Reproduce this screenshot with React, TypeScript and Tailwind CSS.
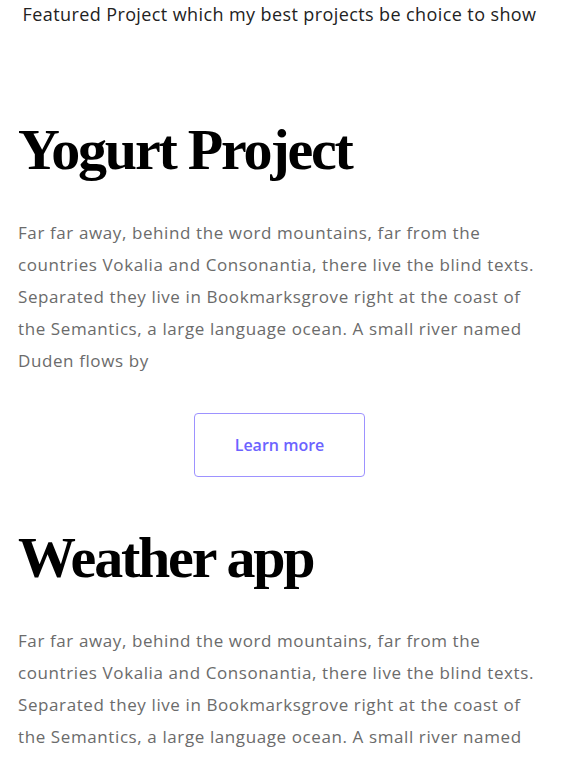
import React, { FC } from "react";

const BODY =
  "Far far away, behind the word mountains, far from the countries Vokalia and Consonantia, there live the blind texts. Separated they live in Bookmarksgrove right at the coast of the Semantics, a large language ocean. A small river named Duden flows by";

interface ProjectProps {
  title: string;
  button?: boolean;
}

const Project: FC<ProjectProps> = ({ title, button }) => {
  return (
    <div className="flex flex-col">
      <h2 className="font-['Liberation_Serif',serif] font-bold text-[58px] leading-[70px] text-black tracking-[-2.2px]">
        {title}
      </h2>
      <p className="mt-[32px] pr-[2px] font-['Open_Sans',sans-serif] text-[17px] leading-[32px] tracking-[0.6px] text-[#6b6b6b]">
        {BODY}
      </p>
      {button && (
        <div className="flex justify-center mt-[36px] pr-[10px]">
          <button className="w-[171px] h-[64px] rounded-[4px] border border-[#9d92ff] text-[#6c63ff] font-['Open_Sans',sans-serif] font-semibold text-[16px]">
            Learn more
          </button>
        </div>
      )}
    </div>
  );
};

const App: FC = () => {
  return (
    <div className="min-h-screen bg-white">
      <div className="pt-[1px] text-center font-['Open_Sans',sans-serif] font-medium text-[18px] leading-[26px] tracking-[0.4px] text-[#222] pr-[10px]">
        Featured Project which my best projects be choice to show
      </div>
      <div className="flex flex-col gap-[46px] px-[18px] mt-[88px]">
        <Project title="Yogurt Project" button />
        <Project title="Weather app" />
      </div>
    </div>
  );
};

export default App;
